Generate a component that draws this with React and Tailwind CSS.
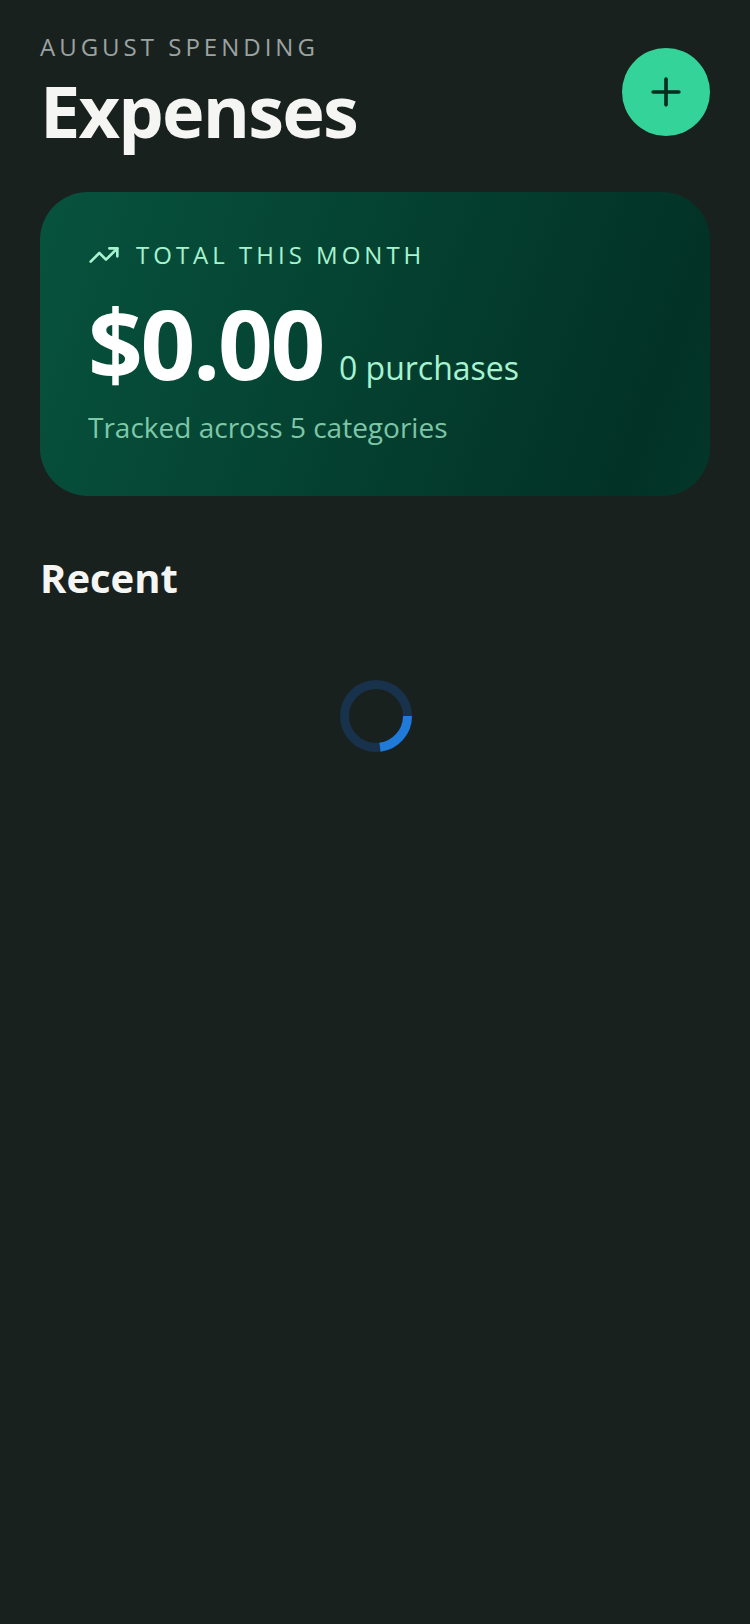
import { Plus, TrendingUp } from 'lucide-react'

export default function App() {
  return (
    <div className="min-h-[1624px] bg-[#19211f] px-10 pt-8 font-['Open_Sans',sans-serif]">
      <div className="flex items-start justify-between">
        <div>
          <p className="text-2xl leading-[30px] tracking-[4px] text-[#9ca3a1]">AUGUST SPENDING</p>
          <h1 className="mt-[6px] text-[72px] leading-[84px] font-bold tracking-[-1.8px] text-[#f5f5f4]">Expenses</h1>
        </div>
        <button className="mt-4 flex h-[88px] w-[88px] items-center justify-center rounded-full bg-[#34d399] text-[#052e1f]">
          <Plus size={44} strokeWidth={2} />
        </button>
      </div>

      <div className="mt-10 rounded-[48px] bg-[linear-gradient(110deg,#07533d_0%,#023226_88%,#04362a_100%)] px-12 pt-[47px] pb-[51px]">
        <div className="flex items-center gap-4">
          <TrendingUp size={32} className="text-[#a7f3d0]" />
          <span className="text-2xl leading-[30px] tracking-[4px] text-[#a7f3d0]">TOTAL THIS MONTH</span>
        </div>
        <div className="mt-4 flex items-baseline gap-4">
          <span className="text-[96px] leading-[112px] font-bold tracking-[-2.4px] text-white">$0.00</span>
          <span className="text-[32px] text-[#a7f3d0]">0 purchases</span>
        </div>
        <p className="mt-[10px] text-[28px] leading-9 text-[#a7f3d0]/75">Tracked across 5 categories</p>
      </div>

      <h2 className="mt-[58px] text-[40px] leading-[48px] font-bold text-[#f5f5f4]">Recent</h2>

      <div className="mt-[78px] flex justify-center pl-px">
        <svg width="72" height="72" viewBox="0 0 72 72" fill="none">
          <circle cx="36" cy="36" r="31.5" stroke="#17324a" strokeWidth="9" />
          <path d="M67.5 36A31.5 31.5 0 0 1 40 67.25" stroke="#1f7ad9" strokeWidth="9" />
        </svg>
      </div>
    </div>
  )
}
